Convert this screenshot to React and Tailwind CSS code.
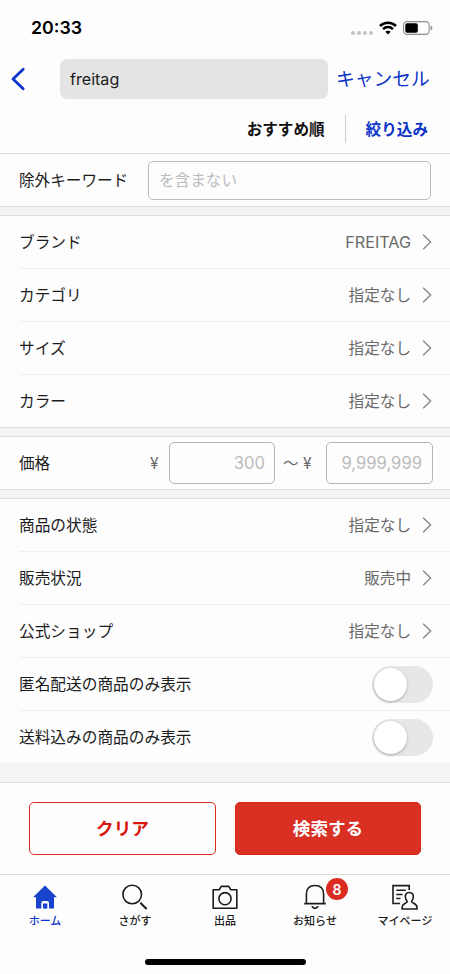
const JP = "font-['Inter','Noto_Sans_CJK_JP',sans-serif]";

function Chevron() {
  return (
    <svg className="ml-[11px] h-4 w-[10px] shrink-0" viewBox="0 0 10 16" fill="none" stroke="#858585" strokeWidth="1.3">
      <path d="M1.2 0.8 8.6 8 1.2 15.2" />
    </svg>
  );
}

function Gap() {
  return <div className="h-[10px] shrink-0 border-y border-[#dedede] bg-[#f4f4f4]" />;
}

function Row({ label, children, last }) {
  return (
    <div className={`ml-[19px] flex shrink-0 items-center justify-between pr-[18px] ${last ? "h-[52px]" : "h-[53px] border-b border-[#efefef]"}`}>
      <span className="whitespace-nowrap pt-[2px] text-[15.7px] text-[#1c1c1c]">{label}</span>
      {children}
    </div>
  );
}

function Value({ children, latin }) {
  return (
    <span className={`flex items-center whitespace-nowrap text-[#6a6a6a] ${latin ? "text-[16.2px]" : "text-[15.6px]"}`}>
      <span className={latin ? "" : "pt-[2px]"}>{children}</span>
      <Chevron />
    </span>
  );
}

function Toggle() {
  return (
    <span className="-mr-[1px] flex h-[37px] w-[61px] items-center rounded-full bg-[#e7e7e7] pl-[2px]">
      <span className="h-[33px] w-[33px] rounded-full bg-white shadow-[0_1px_3px_rgba(0,0,0,0.28)]" />
    </span>
  );
}

function Tab({ label, active, children }) {
  return (
    <div className={`flex w-[90px] flex-col items-center pt-[8px] ${active ? "text-[#0d34c8]" : "text-[#1c1c1c]"}`}>
      <div className="relative h-[28px] w-[28px]">{children}</div>
      <span className="mt-[2px] whitespace-nowrap text-[11px] font-medium leading-[16px]">{label}</span>
    </div>
  );
}

const stroke = { fill: "none", stroke: "currentColor", strokeWidth: 1.6 };

export default function App() {
  return (
    <div className={`flex h-[974px] w-[450px] flex-col overflow-hidden bg-[#fdfdfd] ${JP}`}>
      <div className="flex h-[56px] shrink-0 items-center justify-between pl-[31px] pr-[17px]">
        <span className="text-[17.8px] font-semibold leading-none text-black">20:33</span>
        <div className="flex items-center">
          <div className="mr-[6px] mt-[9px] flex gap-[2px]">
            {[0, 1, 2, 3].map((i) => (
              <span key={i} className="h-[4px] w-[4px] rounded-full bg-[#c4c4c4]" />
            ))}
          </div>
          <svg className="h-[14px] w-[18px]" viewBox="0 0 18 14" fill="none" stroke="#000" strokeWidth="2.5">
            <path d="M1 5C5.5 .5 12.5 .5 17 5" />
            <path d="M4 8.2C6.8 5.4 11.2 5.4 14 8.2" />
            <path d="M9 13.5 6.3 10.7Q9 8.6 11.7 10.7Z" fill="#000" stroke="none" />
          </svg>
          <svg className="ml-[6px] h-[14px] w-[30px]" viewBox="0 0 30 14">
            <rect x=".6" y=".6" width="25.6" height="12.8" rx="3.6" fill="none" stroke="#8d8d8d" strokeWidth="1.1" />
            <rect x="2.3" y="2.3" width="12.5" height="9.4" rx="1.8" fill="#000" />
            <path d="M27.6 4.8Q29.4 5.3 29.4 7T27.6 9.2Z" fill="#8d8d8d" />
          </svg>
        </div>
      </div>
      <div className="flex h-[46px] shrink-0 items-center pl-[10px]">
        <svg className="h-[24px] w-[16px]" viewBox="0 0 16 24" fill="none" stroke="#0d34c8" strokeWidth="2.8" strokeLinecap="round" strokeLinejoin="round">
          <path d="M13.2 2.3 3 12 13.2 21.7" />
        </svg>
        <div className="ml-[34px] flex h-[40px] w-[268px] items-center rounded-[7px] bg-[#e4e4e4] pl-[10px] text-[16.1px] text-[#1c1c1c]">freitag</div>
        <span className="ml-[8px] whitespace-nowrap pt-[2px] text-[18.8px] text-[#0d34c8]">キャンセル</span>
      </div>
      <div className="flex h-[52px] shrink-0 items-center justify-end border-b border-[#dcdcdc] pr-[22px] pt-[3px] text-[15.6px] font-bold">
        <span className="pt-[1px] text-[#111]">おすすめ順</span>
        <span className="ml-[20px] mr-[20px] h-[28px] w-px bg-[#cfcfcf]" />
        <span className="pt-[1px] text-[#0d34c8]">絞り込み</span>
      </div>
      <div className="flex h-[52px] shrink-0 items-center pl-[19px] text-[15.6px]">
        <span className="w-[129px] pt-[2px] text-[#1c1c1c]">除外キーワード</span>
        <div className="flex h-[39px] w-[283px] items-center rounded-[5px] border border-[#bcbcbc] pl-[10px] pt-[2px] text-[#bbb]">を含まない</div>
      </div>
      <Gap />
      <Row label="ブランド"><Value latin>FREITAG</Value></Row>
      <Row label="カテゴリ"><Value>指定なし</Value></Row>
      <Row label="サイズ"><Value>指定なし</Value></Row>
      <Row label="カラー" last><Value>指定なし</Value></Row>
      <Gap />
      <div className="flex h-[52px] shrink-0 items-center pl-[19px] text-[15.6px] text-[#6a6a6a]">
        <span className="w-[131px] pt-[2px] text-[#1c1c1c]">価格</span>
        <span className="w-[19px] pt-[2px]">¥</span>
        <div className="flex h-[42px] w-[106px] items-center justify-end rounded-[5px] border border-[#b5b5b5] pr-[9px] text-[16.6px] text-[#bbb]">300</div>
        <span className="ml-[8px] w-[20px] pt-[2px]">〜</span>
        <span className="w-[23px] pt-[2px]">¥</span>
        <div className="flex h-[42px] w-[107px] items-center justify-end rounded-[5px] border border-[#b5b5b5] pr-[10px] text-[16.6px] text-[#bbb]">9,999,999</div>
      </div>
      <Gap />
      <Row label="商品の状態"><Value>指定なし</Value></Row>
      <Row label="販売状況"><Value>販売中</Value></Row>
      <Row label="公式ショップ"><Value>指定なし</Value></Row>
      <Row label="匿名配送の商品のみ表示"><Toggle /></Row>
      <Row label="送料込みの商品のみ表示" last><Toggle /></Row>
      <div className="h-[20px] shrink-0 border-b border-[#dedede] bg-[#f4f4f4]" />
      <div className="flex h-[92px] shrink-0 gap-[19px] border-b border-[#dcdcdc] pl-[29px] pt-[19px] text-[17.6px] font-bold">
        <div className="flex h-[53px] w-[187px] items-center justify-center rounded-[5px] border border-[#dc2c20] pt-[2px] text-[#d9150c]">クリア</div>
        <div className="flex h-[53px] w-[186px] items-center justify-center rounded-[5px] border border-[#d8261a] bg-[#da3024] pt-[2px] text-white">検索する</div>
      </div>
      <div className="flex h-[83px] shrink-0">
        <Tab label="ホーム" active>
          <svg className="h-[28px] w-[28px]" viewBox="0 0 28 28">
            <path fill="#1a43cd" d="M14 2.5 26 14.3H23V25.6H18V20.2Q18 18 16 18H12.3Q10.3 18 10.3 20.2V25.6H5V14.3H2Z" />
            <path fill="#1a43cd" d="M12 20.5H16.3V25.6H12Z" />
          </svg>
        </Tab>
        <Tab label="さがす">
          <svg className="h-[28px] w-[28px]" viewBox="0 0 28 28" {...stroke}>
            <circle cx="11.2" cy="11.5" r="9.3" />
            <path d="M19.3 19.8 25.6 26" strokeWidth="2" />
          </svg>
        </Tab>
        <Tab label="出品">
          <svg className="h-[28px] w-[28px]" viewBox="0 0 28 28" {...stroke} strokeLinejoin="round">
            <path d="M2.2 6.8H8.2L10.2 3.4H17.8L19.8 6.8H25.8V25.3H2.2Z" />
            <circle cx="14" cy="15.7" r="6.1" />
          </svg>
        </Tab>
        <Tab label="お知らせ">
          <svg className="h-[28px] w-[28px]" viewBox="0 0 28 28" {...stroke}>
            <path d="M3.2 20.6H24.8M5.4 20.6V11.2C5.4 5.3 9 2.5 14 2.5S22.6 5.3 22.6 11.2V20.6M10.8 23.3Q14 27.5 17.2 23.3" />
          </svg>
          <span className="absolute left-[25px] top-[-5px] flex h-[22px] w-[22px] items-center justify-center rounded-full bg-[#da2c20] text-[14px] font-semibold text-white">8</span>
        </Tab>
        <Tab label="マイページ">
          <svg className="h-[28px] w-[28px]" viewBox="0 0 28 28" {...stroke}>
            <path d="M9 20.5H2V2.6H18.2V7M5.3 7.3H14.8M5.3 11.5H11.5M5.3 15.5H9.5" />
            <path d="M18.3 9.5C15 9.5 14 11.8 14.4 14.5C14.7 16.5 15.6 17.6 16.3 18.5C16.1 20.6 11.4 20.2 11.1 24V26H26V24C25.7 20.2 20.8 20.6 20.5 18.5C21.3 17.6 22 16.5 22.3 14.5C22.7 11.8 21.6 9.5 18.3 9.5Z" />
          </svg>
        </Tab>
      </div>
      <div className="mx-auto mt-px h-[6px] w-[161px] shrink-0 rounded-full bg-black" />
    </div>
  );
}
